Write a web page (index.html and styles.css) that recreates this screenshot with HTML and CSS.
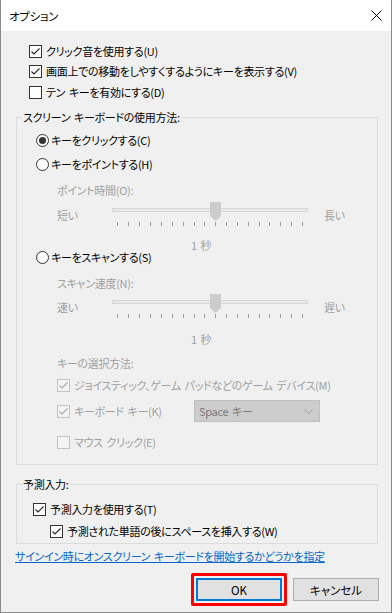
FILE: index.html
```html
<!DOCTYPE html>
<html lang="ja">
<head>
    <meta charset="UTF-8">
    <meta name="viewport" content="width=device-width, initial-scale=1.0">
    <title>オプション</title>
    <link rel="stylesheet" href="styles.css">
</head>
<body>
<div class="window">
    <div class="titlebar">
        <span class="title">オプション</span>
        <svg class="close" width="11" height="11" viewBox="0 0 11 11"><path d="M0.5 0.5 L10.5 10.5 M10.5 0.5 L0.5 10.5" stroke="#000" stroke-width="1" fill="none"/></svg>
    </div>

    <div class="top-options">
        <div class="opt"><span class="check"><svg viewBox="0 0 11 11"><path d="M1.5 5.5 L4 8 L9.5 2.5" stroke="#222" stroke-width="1.1" fill="none"/></svg></span>クリック音を使用する(U)</div>
        <div class="opt"><span class="check"><svg viewBox="0 0 11 11"><path d="M1.5 5.5 L4 8 L9.5 2.5" stroke="#222" stroke-width="1.1" fill="none"/></svg></span>画面上での移動をしやすくするようにキーを表示する(V)</div>
        <div class="opt"><span class="check"></span>テン キーを有効にする(D)</div>
    </div>

    <fieldset class="group usage">
        <legend>スクリーン キーボードの使用方法:</legend>

        <div class="opt r-click"><span class="radio on"></span>キーをクリックする(C)</div>
        <div class="opt r-point"><span class="radio"></span>キーをポイントする(H)</div>

        <div class="sub-label point-label">ポイント時間(O):</div>
        <div class="slider point-slider">
            <span class="end-label">短い</span>
            <svg class="track" width="196" height="26" viewBox="0 0 196 26">
                <rect x="0.5" y="6.5" width="195" height="3" fill="#e7eaea" stroke="#d6d6d6"/>
                <g class="ticks" stroke="#9c9c9c">
                    <path d="M5.5 20v4 M16.5 20v4 M27.5 20v4 M38.5 20v4 M49.5 20v4 M60.5 20v4 M71.5 20v4 M82.5 20v4 M92.5 20v4 M103.5 20v4 M114.5 20v4 M125.5 20v4 M136.5 20v4 M147.5 20v4 M157.5 20v4 M168.5 20v4 M179.5 20v4 M190.5 20v4"/>
                </g>
                <polygon points="98,0 109,0 109,14 103.5,19 98,14" fill="#cccccc"/>
            </svg>
            <span class="end-label long">長い</span>
        </div>
        <div class="secs point-secs">1 秒</div>

        <div class="opt r-scan"><span class="radio"></span>キーをスキャンする(S)</div>

        <div class="sub-label scan-label">スキャン速度(N):</div>
        <div class="slider scan-slider">
            <span class="end-label">速い</span>
            <svg class="track" width="196" height="26" viewBox="0 0 196 26">
                <rect x="0.5" y="6.5" width="195" height="3" fill="#e7eaea" stroke="#d6d6d6"/>
                <g class="ticks" stroke="#9c9c9c">
                    <path d="M5.5 20v4 M16.5 20v4 M27.5 20v4 M38.5 20v4 M49.5 20v4 M60.5 20v4 M71.5 20v4 M82.5 20v4 M92.5 20v4 M103.5 20v4 M114.5 20v4 M125.5 20v4 M136.5 20v4 M147.5 20v4 M157.5 20v4 M168.5 20v4 M179.5 20v4 M190.5 20v4"/>
                </g>
                <polygon points="98,0 109,0 109,14 103.5,19 98,14" fill="#cccccc"/>
            </svg>
            <span class="end-label long">遅い</span>
        </div>
        <div class="secs scan-secs">1 秒</div>

        <div class="sub-label select-label">キーの選択方法:</div>
        <div class="opt disabled joy"><span class="check"><svg viewBox="0 0 11 11"><path d="M1.5 5.5 L4 8 L9.5 2.5" stroke="#a8a8a8" stroke-width="1.1" fill="none"/></svg></span>ジョイスティック、ゲーム パッドなどのゲーム デバイス(M)</div>
        <div class="opt disabled kbd">
            <span class="check"><svg viewBox="0 0 11 11"><path d="M1.5 5.5 L4 8 L9.5 2.5" stroke="#a8a8a8" stroke-width="1.1" fill="none"/></svg></span>
            <span class="kbd-label">キーボード キー(K)</span>
            <span class="dropdown">Space キー<svg width="9" height="5" viewBox="0 0 9 5"><path d="M0.5 0.5 L4.5 4.5 L8.5 0.5" stroke="#a0a0a0" fill="none"/></svg></span>
        </div>
        <div class="opt disabled mouse"><span class="check"></span>マウス クリック(E)</div>
    </fieldset>

    <fieldset class="group predict">
        <legend>予測入力:</legend>
        <div class="opt use-predict"><span class="check"><svg viewBox="0 0 11 11"><path d="M1.5 5.5 L4 8 L9.5 2.5" stroke="#222" stroke-width="1.1" fill="none"/></svg></span>予測入力を使用する(T)</div>
        <div class="opt add-space"><span class="check"><svg viewBox="0 0 11 11"><path d="M1.5 5.5 L4 8 L9.5 2.5" stroke="#222" stroke-width="1.1" fill="none"/></svg></span>予測された単語の後にスペースを挿入する(W)</div>
    </fieldset>

    <a class="signin-link" href="#">サインイン時にオンスクリーン キーボードを開始するかどうかを指定</a>

    <div class="buttons">
        <span class="highlight"><button class="btn ok">OK</button></span>
        <button class="btn">キャンセル</button>
    </div>
</div>
</body>
</html>
```

FILE: styles.css
```css
body {
    margin: 0;
    font-family: "Noto Sans CJK JP", "Noto Sans", sans-serif;
    font-size: 11px;
    font-feature-settings: "palt" 1;
    letter-spacing: -0.3px;
    word-spacing: 1.5px;
    color: #000;
    background-color: #f0f0f0;
}

.window {
    width: 392px;
    height: 613px;
    box-sizing: border-box;
    border: 1px solid #8c8c8c;
    border-top: none;
    background-color: #f0f0f0;
    overflow: hidden;
}

.titlebar {
    height: 31px;
    background-color: #fff;
    display: flex;
    align-items: center;
    justify-content: space-between;
    padding: 0 9px 0 8px;
}

.title {
    font-size: 11.5px;
    line-height: 16px;
}

/* rows with a checkbox or radio */
.opt {
    display: flex;
    align-items: center;
    height: 20px;
    line-height: 16px;
    white-space: nowrap;
}

.check {
    width: 13px;
    height: 13px;
    box-sizing: border-box;
    border: 1px solid #333;
    background-color: #fff;
    margin-right: 4px;
    flex: none;
    display: flex;
    align-items: center;
    justify-content: center;
}

.check svg {
    width: 11px;
    height: 11px;
}

.radio {
    width: 13px;
    height: 13px;
    box-sizing: border-box;
    border: 1px solid #333;
    border-radius: 50%;
    background-color: #fff;
    margin-right: 2px;
    flex: none;
    display: flex;
    align-items: center;
    justify-content: center;
}

.radio.on::after {
    content: "";
    width: 7px;
    height: 7px;
    border-radius: 50%;
    background-color: #333;
}

.top-options {
    padding: 10px 0 0 28px;
}

.top-options .opt:last-child {
    margin-top: 1px;
}

/* group boxes */
.group {
    border: 1px solid #dcdcdc;
    margin: 0 13px 0 15px;
    padding: 0;
    min-width: 0;
}

.group legend {
    margin-left: 5px;
    padding: 0 1px;
    line-height: 16px;
}

.usage {
    margin-top: 7px;
    padding-bottom: 12px;
}

.predict {
    margin-top: 11px;
    padding-bottom: 2px;
}

.r-click { margin: 5px 0 0 19px; }
.r-point { margin: 4px 0 0 19px; }

.r-scan {
    margin-left: 19px;
    height: 12px;
}

.sub-label {
    color: #a0a0a0;
    height: 20px;
    line-height: 20px;
    margin-left: 40px;
}

.point-label { margin-top: 6px; }
.scan-label { margin-top: 10px; }
.select-label { margin-top: 8px; }

.slider {
    display: flex;
    align-items: center;
    height: 26px;
    margin-left: 40px;
    color: #a0a0a0;
}

.point-slider { margin-top: 2px; }
.scan-slider { margin-top: 1px; }

.end-label {
    width: 55px;
    line-height: 16px;
}

.end-label.long {
    width: auto;
    margin-left: 16px;
}

.track {
    display: block;
    flex: none;
}

.secs {
    height: 12px;
    line-height: 12px;
    padding-left: 174px;
    color: #a0a0a0;
}

.point-secs { margin-top: 11px; }
.scan-secs { margin-top: 13px; }

.disabled {
    color: #a0a0a0;
    margin-left: 40px;
}

.disabled .check {
    border-color: #c2c2c2;
    background-color: #f4f4f4;
}

.joy { margin-top: 2px; }

.kbd {
    height: 22px;
    margin-top: 5px;
}

.kbd-label {
    width: 120px;
}

.dropdown {
    width: 126px;
    height: 22px;
    box-sizing: border-box;
    border: 1px solid #bfbfbf;
    background-color: #cccccc;
    color: #7a7a7a;
    display: flex;
    align-items: center;
    justify-content: space-between;
    padding: 0 6px 0 4px;
}

.mouse { margin-top: 10px; }

.use-predict { margin: 7px 0 0 16px; }
.add-space { margin: 2px 0 0 33px; }

.signin-link {
    display: block;
    margin: 4px 0 0 14px;
    line-height: 16px;
    color: #0066cc;
    text-decoration: underline;
}

.buttons {
    display: flex;
    justify-content: flex-end;
    align-items: center;
    gap: 6px;
    height: 23px;
    margin-top: 14px;
    padding-right: 12px;
}

.highlight {
    display: flex;
    padding: 2px;
    border: 3px solid #ff0000;
    border-radius: 2px;
}

.btn {
    width: 86px;
    height: 23px;
    box-sizing: border-box;
    border: 1px solid #adadad;
    background-color: #e1e1e1;
    font-family: "Noto Sans CJK JP", "Noto Sans", sans-serif;
    font-size: 11.5px;
    font-feature-settings: "palt" 1;
    color: #000;
    padding: 0;
}

.btn.ok {
    border: 2px solid #0078d7;
}
```
